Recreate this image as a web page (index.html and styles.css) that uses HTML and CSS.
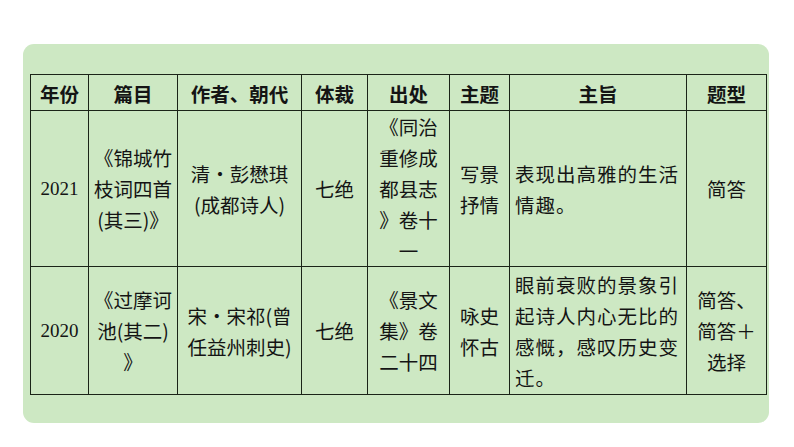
FILE: index.html
```html
<!DOCTYPE html>
<html lang="zh">
<head>
<meta charset="utf-8">
<link rel="stylesheet" href="styles.css">
</head>
<body>
<div class="card">
  <table class="grid">
    <colgroup>
      <col class="c1"><col class="c2"><col class="c3"><col class="c4">
      <col class="c5"><col class="c6"><col class="c7"><col class="c8">
    </colgroup>
    <thead>
      <tr class="head">
        <th>年份</th><th>篇目</th><th>作者、朝代</th><th>体裁</th><th>出处</th><th>主题</th><th>主旨</th><th>题型</th>
      </tr>
    </thead>
    <tbody>
      <tr class="r1">
        <td class="year">2021</td>
        <td>《锦城竹<br>枝词四首<br>(其三)》</td>
        <td>清・彭懋琪<br>(成都诗人)</td>
        <td>七绝</td>
        <td>《同治<br>重修成<br>都县志<br>》卷十<br>一</td>
        <td>写景<br>抒情</td>
        <td class="left">表现出高雅的生活<br>情趣。</td>
        <td>简答</td>
      </tr>
      <tr class="r2">
        <td class="year">2020</td>
        <td>《过摩诃<br>池(其二)<br>》</td>
        <td>宋・宋祁(曾<br>任益州刺史)</td>
        <td>七绝</td>
        <td>《景文<br>集》卷<br>二十四</td>
        <td>咏史<br>怀古</td>
        <td class="left">眼前衰败的景象引<br>起诗人内心无比的<br>感慨，感叹历史变<br>迁。</td>
        <td>简答、<br>简答＋<br>选择</td>
      </tr>
    </tbody>
  </table>
</div>
</body>
</html>
```
FILE: styles.css
```css
html, body {
  margin: 0;
  padding: 0;
  background: #ffffff;
}
body {
  font-family: "Noto Sans CJK SC", "Noto Sans", sans-serif;
  color: #141414;
}
.card {
  margin: 44px 25px 0 23px;
  width: 746px;
  height: 379px;
  box-sizing: border-box;
  padding: 30px 0 0 7px;
  background: #cde8c3;
  border-radius: 11px;
}
.grid {
  border-collapse: collapse;
  table-layout: fixed;
  width: 736px;
}
.c1 { width: 58px; }
.c2 { width: 89px; }
.c3 { width: 124px; }
.c4 { width: 66px; }
.c5 { width: 82px; }
.c6 { width: 60px; }
.c7 { width: 177px; }
.c8 { width: 80px; }
.grid th, .grid td {
  border: 1px solid #1b2418;
  padding: 0;
  text-align: center;
  vertical-align: middle;
  font-size: 19.5px;
  line-height: 31px;
  white-space: nowrap;
}
.grid th {
  font-weight: 700;
  height: 33px;
  padding-top: 2px;
  line-height: 31px;
}
.r1 td { height: 153px; }
.r2 td { height: 127px; }
.grid td.year {
  font-family: "Liberation Serif", "Times New Roman", serif;
  font-size: 19px;
}
.grid td.left {
  text-align: left;
  padding-left: 5px;
  letter-spacing: 1px;
}
```
